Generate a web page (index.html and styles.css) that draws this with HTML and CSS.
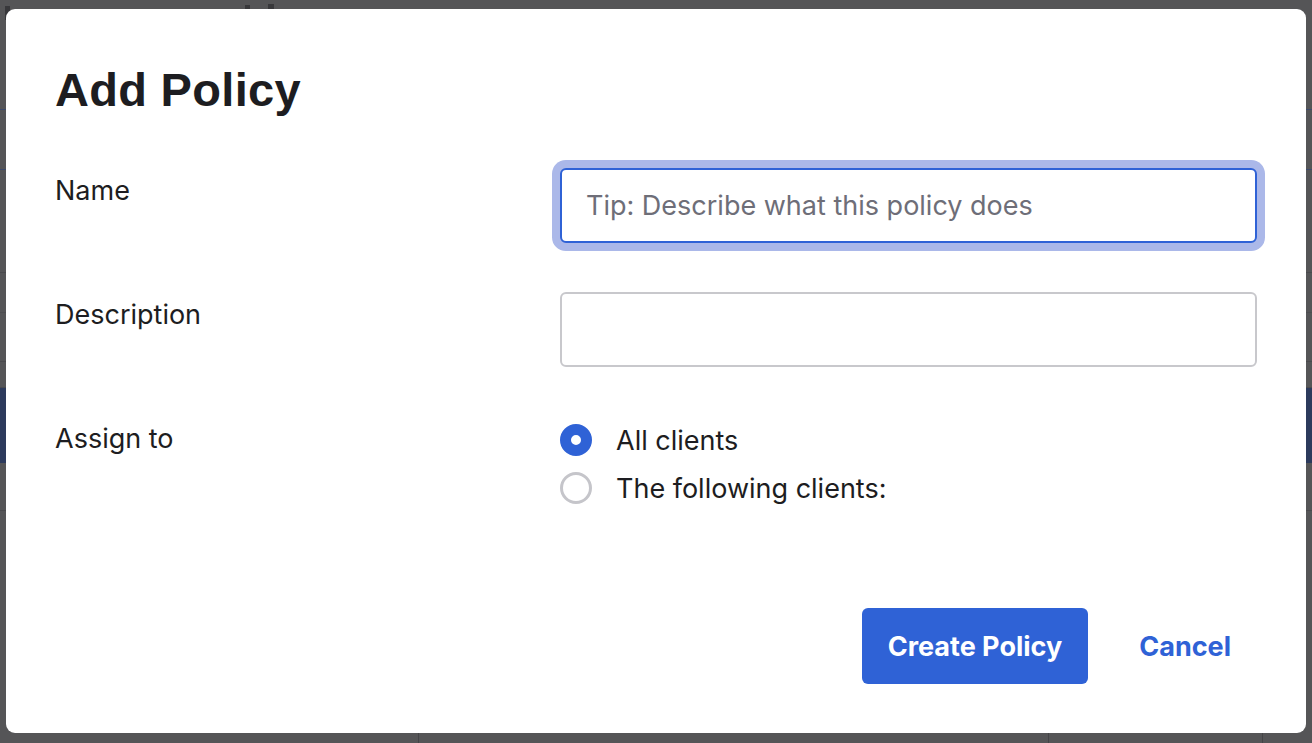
FILE: index.html
```html
<!DOCTYPE html>
<html lang="en">
<head>
<meta charset="utf-8">
<title>Add Policy</title>
<link rel="stylesheet" href="styles.css">
</head>
<body>
<div class="backdrop">
  <div class="bg-top"><span class="bg-mark m1"></span><span class="bg-mark m2"></span><span class="bg-mark m3"></span></div>
  <div class="bg-row r1"></div>
  <div class="bg-row r2"></div>
  <div class="bg-row r3"></div>
  <div class="bg-row r4"></div>
  <div class="bg-row r5"></div>
  <div class="bg-row r6"></div>
  <div class="bg-row r7"></div>
  <div class="bg-row r8"></div>
  <div class="bg-bottom"><span class="vl v1"></span><span class="vl v2"></span><span class="vl v3"></span></div>
</div>

<div class="modal" role="dialog" aria-labelledby="title">
  <h1 id="title" class="modal-title">Add Policy</h1>
  <form class="form">
    <div class="field">
      <label class="field-label" for="name">Name</label>
      <input id="name" class="input input-focus" type="text" placeholder="Tip: Describe what this policy does">
    </div>
    <div class="field">
      <label class="field-label" for="desc">Description</label>
      <input id="desc" class="input" type="text">
    </div>
    <div class="field">
      <span class="field-label">Assign to</span>
      <div class="radios">
        <label class="radio"><span class="radio-dot checked"></span><span>All clients</span></label>
        <label class="radio"><span class="radio-dot"></span><span>The following clients:</span></label>
      </div>
    </div>
  </form>
  <div class="footer">
    <button class="btn btn-primary" type="button">Create Policy</button>
    <button class="btn btn-link" type="button">Cancel</button>
  </div>
</div>
</body>
</html>
```

FILE: styles.css
```css
* { box-sizing: border-box; }
html, body { margin: 0; padding: 0; }
body {
  width: 1312px;
  height: 743px;
  overflow: hidden;
  background: #555557;
  font-family: Inter, "Noto Sans", sans-serif;
  color: #1d1d21;
}

/* dimmed page behind the dialog */
.backdrop {
  display: flex;
  flex-direction: column;
  height: 743px;
}
.bg-top { height: 110px; position: relative; border-bottom: 1px solid #3d4a6a; }
.bg-mark { position: absolute; background: #38383b; }
.m1 { left: 5px; top: 6px; width: 5px; height: 14px; }
.m2 { left: 245px; top: 5px; width: 5px; height: 4px; }
.m3 { left: 268px; top: 4px; width: 6px; height: 5px; }
.bg-row { border-bottom: 1px solid #4a4a4d; }
.r1 { height: 60px; border-bottom-color: #3d4a6a; }
.r2 { height: 103px; }
.r3 { height: 40px; border-bottom-color: #4d4d50; }
.r4 { height: 49px; }
.r5 { height: 26px; }
.r6 { height: 75px; background: #2c3a5c; border: 0; }
.r7 { height: 48px; }
.r8 { flex: 1; border: 0; }
.bg-bottom { height: 10px; position: relative; }
.vl { position: absolute; top: 0; bottom: 0; width: 1px; background: #444447; }
.v1 { left: 418px; }
.v2 { left: 1048px; }
.v3 { left: 1262px; }

/* dialog */
.modal {
  position: absolute;
  left: 6px;
  top: 9px;
  width: 1300px;
  height: 724px;
  background: #ffffff;
  border-radius: 9px;
  padding: 53px 49px 49px;
  display: flex;
  flex-direction: column;
}
.modal-title {
  margin: 0;
  font-family: "Liberation Sans", Arial, sans-serif;
  font-weight: 700;
  font-size: 47px;
  line-height: 55px;
  color: #1d1d21;
  letter-spacing: 0.3px;
}
.form {
  margin-top: 51px;
  display: flex;
  flex-direction: column;
  gap: 49px;
}
.field {
  display: grid;
  grid-template-columns: 505px 697px;
  align-items: start;
}
.field-label {
  font-size: 27px;
  line-height: 32px;
  padding-top: 7px;
  color: #1d1d21;
}
.input {
  width: 697px;
  height: 75px;
  border: 2px solid #c8c8cc;
  border-radius: 6px;
  padding: 0 24px;
  font-family: Inter, "Noto Sans", sans-serif;
  font-size: 27px;
  color: #1d1d21;
  background: #fff;
  outline: none;
}
.input::placeholder { color: #6e6e78; opacity: 1; }
.input-focus {
  border-color: #2f62d6;
  box-shadow: 0 0 0 8px #abb8e9;
}
.radios { display: flex; flex-direction: column; }
.radio {
  display: flex;
  align-items: center;
  gap: 24px;
  height: 48px;
  font-size: 27px;
  color: #1d1d21;
}
.radio-dot {
  width: 32px;
  height: 32px;
  border-radius: 50%;
  border: 3px solid #c5c5ca;
  background: #fff;
  flex: none;
}
.radio-dot.checked {
  border: 11px solid #2f62d6;
  background: #fff;
}
.footer {
  margin-top: auto;
  display: flex;
  justify-content: flex-end;
  gap: 25px;
}
.btn {
  height: 76px;
  padding: 0 26px;
  border: 0;
  border-radius: 6px;
  font-family: Inter, "Noto Sans", sans-serif;
  font-weight: 700;
  font-size: 27px;
  cursor: pointer;
}
.btn-primary { background: #2f62d6; color: #fff; }
.btn-link { background: transparent; color: #2f62d6; }
```
